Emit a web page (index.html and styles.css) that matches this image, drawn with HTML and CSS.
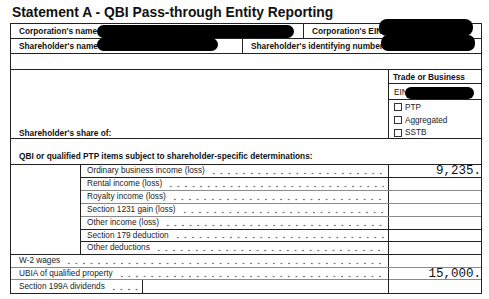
FILE: index.html
```html
<!DOCTYPE html>
<html>
<head>
<meta charset="utf-8">
<link rel="stylesheet" href="styles.css">
</head>
<body>
<div class="page">
  <h1 class="title">Statement A - QBI Pass-through Entity Reporting</h1>
  <div class="form">
    <div class="row r-corp">
      <div class="cell lbl">Corporation's name</div>
      <div class="cell lbl divl">Corporation's EIN</div>
    </div>
    <div class="row r-sh">
      <div class="cell lbl">Shareholder's name</div>
      <div class="cell lbl divl">Shareholder's identifying number</div>
    </div>
    <div class="row r-blank"></div>
    <div class="row r-share">
      <div class="cell lbl share">Shareholder's share of:</div>
      <div class="trade divl">
        <div class="trade-hd lbl">Trade or Business</div>
        <div class="trade-ein">EIN</div>
        <div class="chk"><span class="box"></span>PTP</div>
        <div class="chk"><span class="box"></span>Aggregated</div>
        <div class="chk chk-last"><span class="box"></span>SSTB</div>
      </div>
    </div>
    <div class="row r-qbi">
      <div class="cell lbl qbi">QBI or qualified PTP items subject to shareholder-specific determinations:</div>
    </div>
    <div class="items">
      <div class="items-side"></div>
      <div class="items-list">
        <div class="item">
          <div class="item-label"><span>Ordinary business income (loss)</span><span class="dots"></span></div>
          <div class="amt">9,235.</div>
        </div>
        <div class="item gray">
          <div class="item-label"><span>Rental income (loss)</span><span class="dots"></span></div>
          <div class="amt"></div>
        </div>
        <div class="item gray">
          <div class="item-label"><span>Royalty income (loss)</span><span class="dots"></span></div>
          <div class="amt"></div>
        </div>
        <div class="item gray">
          <div class="item-label"><span>Section 1231 gain (loss)</span><span class="dots"></span></div>
          <div class="amt"></div>
        </div>
        <div class="item">
          <div class="item-label"><span>Other income (loss)</span><span class="dots"></span></div>
          <div class="amt"></div>
        </div>
        <div class="item short">
          <div class="item-label"><span>Section 179 deduction</span><span class="dots"></span></div>
          <div class="amt"></div>
        </div>
        <div class="item">
          <div class="item-label"><span>Other deductions</span><span class="dots"></span></div>
          <div class="amt"></div>
        </div>
      </div>
    </div>
    <div class="wide gray">
      <div class="wide-label"><span>W-2 wages</span><span class="dots"></span></div>
      <div class="amt"></div>
    </div>
    <div class="wide gray short">
      <div class="wide-label"><span>UBIA of qualified property</span><span class="dots"></span></div>
      <div class="amt">15,000.</div>
    </div>
    <div class="wide last three">
      <div class="wide-label divr"><span>Section 199A dividends</span><span class="dots"></span></div>
      <div class="blankcell"></div>
      <div class="amt"></div>
    </div>
  </div>
  <div class="redact red-a"></div>
  <div class="redact red-b"></div>
  <div class="redact red-c"></div>
  <div class="redact red-d"></div>
  <div class="redact red-e"></div>
</div>
</body>
</html>
```

FILE: styles.css
```css
* { box-sizing: border-box; }
html, body { margin: 0; padding: 0; background: #fff; }
body { font-family: "Liberation Sans", Arial, sans-serif; color: #111; }

.page { position: relative; width: 489px; height: 299px; overflow: hidden; }

.title {
  margin: 4px 0 0 12px;
  font-size: 13.85px;
  line-height: 17px;
  font-weight: bold;
  color: #111;
}

.form {
  margin: 2px 0 0 10px;
  width: 472px;
  border: 1px solid #222;
}

.row { display: grid; border-bottom: 1px solid #222; }
.lbl { font-weight: bold; font-size: 8.3px; line-height: 10px; }
.cell { display: flex; align-items: center; padding-left: 8px; white-space: nowrap; }
.divl { border-left: 1px solid #222; }
.divr { border-right: 1px solid #222; }

.r-corp { height: 15px; grid-template-columns: 292px 1fr; }
.r-sh { height: 15px; grid-template-columns: 231px 1fr; }
.r-blank { height: 16px; }
.r-share { height: 69px; grid-template-columns: 377px 1fr; }
.share { align-items: flex-end; line-height: 9px; }

.trade { display: flex; flex-direction: column; }
.trade-hd { height: 14px; border-bottom: 1px solid #222; display: flex; align-items: center; padding-left: 4px; }
.trade-ein { height: 16px; border-bottom: 1px solid #222; display: flex; align-items: center; padding: 2px 0 0 5px; font-size: 8.2px; }
.chk { height: 13px; display: flex; align-items: center; padding: 1px 0 0 5px; font-size: 8.2px; color: #222; }
.chk-last { height: 12px; }
.box { width: 8px; height: 8px; border: 1px solid #333; margin-right: 3px; flex: none; }

.r-qbi { height: 26px; }
.qbi { align-items: flex-end; padding-bottom: 3px; }

.items { display: grid; grid-template-columns: 70px 1fr; }
.items-side { border-right: 1px solid #222; border-bottom: 1px solid #222; }
.item {
  display: grid;
  grid-template-columns: 307px 1fr;
  height: 13px;
  border-bottom: 1px solid #222;
}
.item.short, .wide.short { height: 12px; }
.gray { border-bottom: 1px solid #8a8a8a !important; }

.item-label, .wide-label {
  display: flex;
  align-items: center;
  font-size: 8.25px;
  line-height: 10px;
  color: #222;
  white-space: nowrap;
}
.item-label { padding: 0 4px 0 6px; }
.wide-label { padding: 0 4px 0 8px; }

.dots {
  flex: 1;
  align-self: stretch;
  margin-left: 5px;
  background-image: radial-gradient(circle, #777 0.75px, transparent 1.15px);
  background-size: 7.6px 3px;
  background-repeat: repeat-x;
  background-position: 0 calc(100% - 2px);
}

.amt {
  border-left: 1px solid #222;
  font-family: "Liberation Mono", "Courier New", monospace;
  font-size: 12.5px;
  line-height: 12px;
  text-align: right;
  padding-right: 0;
  color: #111;
  display: flex;
  align-items: center;
  justify-content: flex-end;
}

.wide {
  display: grid;
  grid-template-columns: 377px 1fr;
  height: 13px;
  border-bottom: 1px solid #222;
}
.wide.three { grid-template-columns: 132px 245px 1fr; }
.wide.last { border-bottom: none; }

.redact { position: absolute; background: #000; border-radius: 7px; }
.red-a { left: 97px; top: 25px; width: 197px; height: 13px; }
.red-b { left: 97px; top: 38px; width: 121px; height: 13px; }
.red-c { left: 379px; top: 19px; width: 94px; height: 17px; border-radius: 8px; }
.red-d { left: 381px; top: 35px; width: 94px; height: 16px; }
.red-e { left: 405px; top: 87px; width: 69px; height: 12px; border-radius: 6px; }
```
